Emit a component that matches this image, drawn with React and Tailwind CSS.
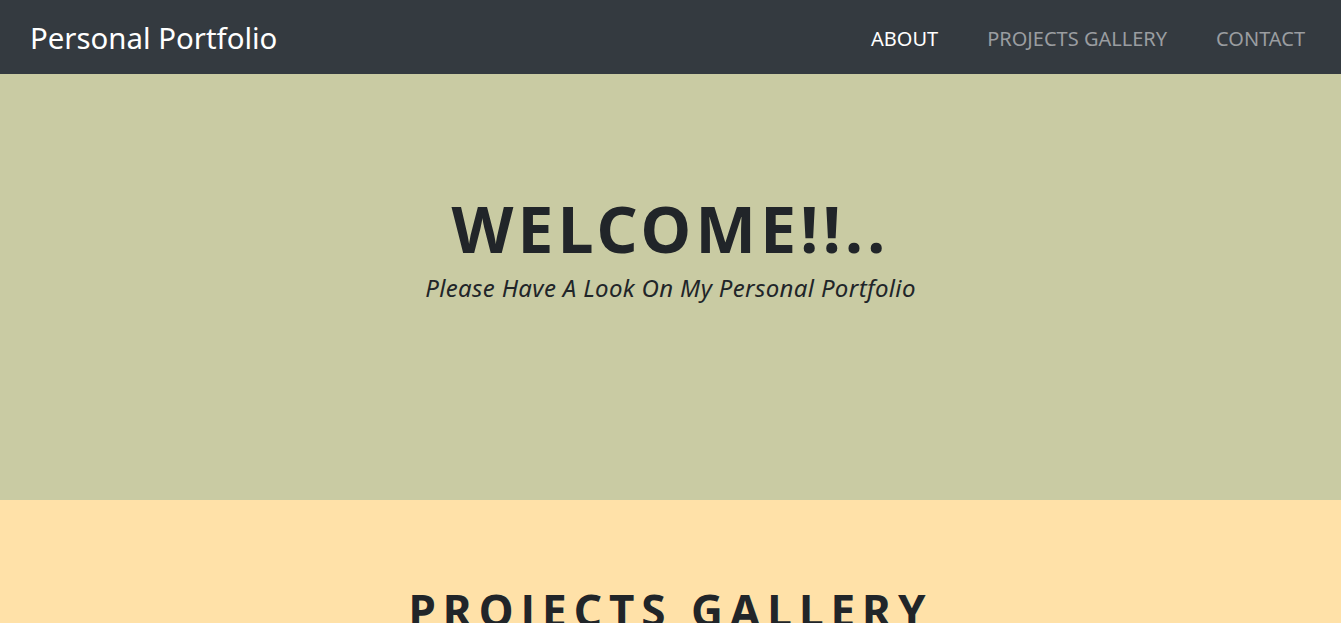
import React from 'react'

const font = { fontFamily: '"Noto Sans", "Open Sans", sans-serif' }

function NavBar() {
  return (
    <nav className="h-[74px] bg-[#343a40] flex items-center justify-between pl-[30px] pr-[36px] pt-[4px]">
      <a href="#" className="text-white text-[29.4px] leading-none">Personal Portfolio</a>
      <ul className="flex items-center gap-[49px] text-[20px] leading-none">
        <li><a href="#" className="text-white">ABOUT</a></li>
        <li><a href="#" className="text-[#9a9da0]">PROJECTS GALLERY</a></li>
        <li><a href="#" className="text-[#9a9da0]">CONTACT</a></li>
      </ul>
    </nav>
  )
}

export default function App() {
  return (
    <div style={font} className="text-[#212529]">
      <NavBar />
      <section className="h-[426px] bg-[#c9cba3] flex flex-col items-center pt-[123px]">
        <h1 className="text-[64px] font-bold tracking-[4.3px] leading-none">WELCOME!!..</h1>
        <p className="mt-[15px] text-[24px] tracking-[0.35px] italic leading-none">Please Have A Look On My Personal Portfolio</p>
      </section>
      <section className="bg-[#ffe1a8] h-[300px] flex flex-col items-center pt-[88px]">
        <h2 className="text-[44px] font-bold tracking-[7px] leading-none">PROJECTS GALLERY</h2>
      </section>
    </div>
  )
}
